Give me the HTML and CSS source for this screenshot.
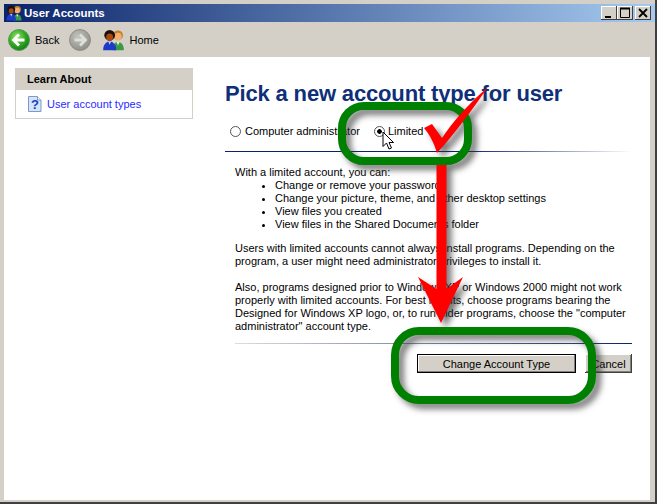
FILE: index.html
```html
<!DOCTYPE html>
<html lang="en">
<head>
<meta charset="utf-8">
<title>User Accounts</title>
<link rel="stylesheet" href="styles.css">
</head>
<body>
<div class="window">
  <header class="titlebar">
    <svg class="title-icon" viewBox="0 0 16 16" width="16" height="16"><use href="#users"/></svg>
    <span class="title-text">User Accounts</span>
    <div class="controls">
      <button class="ctl"><svg viewBox="0 0 16 14" width="16" height="14"><rect x="4" y="10" width="6" height="2" fill="#000"/></svg></button>
      <button class="ctl"><svg viewBox="0 0 16 14" width="16" height="14"><path d="M3.500 2.500h9v9h-9z" fill="none" stroke="#000"/><path d="M3 2.500h10" stroke="#000" stroke-width="2"/></svg></button>
      <button class="ctl ctl-close"><svg viewBox="0 0 16 14" width="16" height="14"><path d="M4 3l8 8M12 3l-8 8" fill="none" stroke="#000" stroke-width="1.800"/></svg></button>
    </div>
  </header>
  <nav class="toolbar">
    <svg class="nav-btn" viewBox="0 0 22 22" width="22" height="22">
      <defs><radialGradient id="gb" cx=".4" cy=".35" r=".75"><stop offset="0" stop-color="#9be870"/><stop offset=".5" stop-color="#35ab25"/><stop offset="1" stop-color="#0b6f14"/></radialGradient></defs>
      <circle cx="11" cy="11" r="10.500" fill="url(#gb)" stroke="#5e9a58"/>
      <path d="M11 5.500 L5.500 11 L11 16.500 M6 11 H16.500" fill="none" stroke="#fff" stroke-width="2.800"/>
    </svg>
    <span class="nav-label">Back</span>
    <svg class="nav-btn nav-forward" viewBox="0 0 22 22" width="22" height="22">
      <defs><radialGradient id="gg" cx=".4" cy=".35" r=".8"><stop offset="0" stop-color="#c4c4c0"/><stop offset="1" stop-color="#84847e"/></radialGradient></defs>
      <circle cx="11" cy="11" r="10.500" fill="url(#gg)" stroke="#8e8e8a"/>
      <path d="M11 5.500 L16.500 11 L11 16.500 M16 11 H5.500" fill="none" stroke="#dededa" stroke-width="2.800"/>
    </svg>
    <svg class="home-icon" viewBox="0 0 16 16" width="23" height="22"><use href="#users"/></svg>
    <span class="nav-label nav-home">Home</span>
  </nav>
  <main class="content">
    <aside class="side">
      <h2 class="side-head">Learn About</h2>
      <div class="side-body">
        <svg viewBox="0 0 14 16" width="14" height="16">
          <path d="M.5 .5h9l3.500 3.500v11.500h-12.500z" fill="#d4e4fa" stroke="#7d9ac4"/>
          <path d="M9.500 .5v3.500h3.500" fill="#fff" stroke="#7d9ac4"/>
          <text x="7" y="13" class="help-q">?</text>
        </svg>
        <a class="side-link" href="#">User account types</a>
      </div>
    </aside>
    <section class="main">
      <h1 class="heading">Pick a new account type for user</h1>
      <div class="radios">
        <label class="radio"><span class="dot"></span>Computer administrator</label>
        <label class="radio radio-limited"><span class="dot dot-on"></span>Limited</label>
      </div>
      <div class="rule rule-top"></div>
      <div class="copy">
        <p>With a limited account, you can:</p>
        <ul>
          <li>Change or remove your password</li>
          <li>Change your picture, theme, and other desktop settings</li>
          <li>View files you created</li>
          <li>View files in the Shared Documents folder</li>
        </ul>
        <p class="p-a">Users with limited accounts cannot always install programs. Depending on the<br>program, a user might need administrator privileges to install it.</p>
        <p class="p-b">Also, programs designed prior to Windows XP or Windows 2000 might not work<br>properly with limited accounts. For best results, choose programs bearing the<br>Designed for Windows XP logo, or, to run older programs, choose the "computer<br>administrator" account type.</p>
      </div>
      <div class="rule rule-bottom"></div>
      <div class="actions">
        <button class="btn btn-primary">Change Account Type</button>
        <button class="btn btn-cancel">Cancel</button>
      </div>
    </section>
  </main>
  <svg class="overlay" viewBox="0 0 657 504" width="657" height="504">
    <g class="shadowed">
      <path class="red" d="M436.500 160 H446.500 V289 L463 277 L441 323 L418 277 L436.500 289 Z"/>
      <rect x="342" y="106" width="126" height="55" rx="22" class="ring"/>
      <rect x="395" y="331" width="197" height="69" rx="24" class="ring"/>
      <path class="red" d="M424 128 L432 124 L442 138 C452 123 468 104 488 87 C472 110 453 136 437 153 C434 143 430 135 424 128 Z"/>
    </g>
    <path d="M383 132 V146.500 L386.500 143 L389 149 L391.500 148 L389 142.500 L393.500 142.500 Z" fill="#fff" stroke="#000"/>
  </svg>
</div>
<svg class="defs" width="0" height="0">
  <symbol id="users" viewBox="0 0 16 16">
    <circle cx="11.300" cy="4.600" r="3.600" fill="#c9802c"/>
    <ellipse cx="11.300" cy="5.500" rx="2.600" ry="2.800" fill="#f2b070"/>
    <path d="M7.500 15.500c-.2-4 1.500-6 3.800-6s4.300 2 4.200 6z" fill="#3a9a48"/>
    <path d="M10.300 9.500h2l-1 2.500z" fill="#e8f4e8"/>
    <circle cx="5.200" cy="4.600" r="3.900" fill="#1a1008"/>
    <ellipse cx="5.200" cy="6" rx="2.500" ry="2.700" fill="#a84a18"/>
    <path d="M.5 15.500c-.2-4 2-6.500 4.700-6.500s5 2.500 4.800 6.500z" fill="#1c3cc8"/>
    <path d="M4.200 9h2l-1 2.500z" fill="#c8d8ff"/>
  </symbol>
</svg>
</body>
</html>
```
FILE: styles.css
```css
* { box-sizing: border-box; }
html, body { margin: 0; padding: 0; }
body { width: 657px; height: 504px; overflow: hidden; background: #d4d0c8; font-family: "Liberation Sans", Arial, sans-serif; font-size: 11px; color: #000; }
.defs { position: absolute; }
.window { position: relative; width: 657px; height: 504px; padding: 4px 0 0 4px; border-right: 2px solid #404040; border-bottom: 2px solid #404040; background: #d4d0c8; display: flex; flex-direction: column; }
.titlebar { height: 18px; flex: none; display: flex; align-items: center; padding: 0 4px 0 2px; background: linear-gradient(90deg, #0a246a, #a6caf0); }
.title-icon { flex: none; margin-right: 2px; }
.title-text { color: #fff; font-weight: 700; font-size: 11.500px; }
.controls { margin-left: auto; display: flex; }
.ctl { width: 16px; height: 14px; padding: 0; border: 0; display: block; background: #d4d0c8; box-shadow: inset -1px -1px 0 #404040, inset 1px 1px 0 #fff; }
.ctl-close { margin-left: 2px; }
.toolbar { height: 35px; flex: none; display: flex; align-items: center; padding-left: 4px; font-size: 11px; }
.nav-label { margin-left: 5px; }
.nav-home { margin-left: 4px; }
.nav-forward { margin-left: 10px; }
.home-icon { margin-left: 11px; }
.content { flex: 1; margin: 0 5px 2px 0; background: #fff; display: flex; align-items: flex-start; }
.side { width: 178px; margin: 11px 0 0 11px; border: 1px solid #d4d0c8; flex: none; }
.side-head { margin: 0; height: 21px; background: #d4d0c8; font-size: 11px; font-weight: 700; line-height: 21px; padding-left: 11px; }
.side-body { height: 28px; display: flex; align-items: center; padding-left: 12px; gap: 5px; }
.help-q { font: 700 13px "Liberation Sans", sans-serif; fill: #1a3fc4; text-anchor: middle; }
.side-link { color: #2a2aff; text-decoration: none; }
.main { width: 407px; margin-left: 32px; }
.heading { margin: 24px 0 0; font-size: 22px; letter-spacing: -.16px; line-height: 26px; font-weight: 700; color: #0f2f78; white-space: nowrap; }
.radios { display: flex; margin: 18px 0 0 5px; height: 13px; align-items: center; }
.radio { display: flex; align-items: center; gap: 4px; line-height: 13px; }
.radio-limited { margin-left: 14px; gap: 3px; }
.dot { width: 11px; height: 11px; border-radius: 50%; border: 1px solid #555; background: #fff; position: relative; }
.dot-on { background: radial-gradient(circle, #000 0 2px, #fff 2.600px); }
.rule { height: 1px; }
.rule-top { margin-top: 13px; background: linear-gradient(90deg, #0a246a 60%, #fff); }
.rule-bottom { margin: 10px 0 0 10px; background: linear-gradient(90deg, #ddd, #0a246a); }
.copy { margin: 14px 0 0 10px; line-height: 13px; white-space: nowrap; }
.copy p { margin: 0; }
.copy ul { margin: 0; padding: 0 0 0 40px; }
.copy li { list-style: disc; }
.copy .p-a { margin-top: 11px; }
.copy .p-b { margin-top: 13px; }
.actions { display: flex; justify-content: flex-end; gap: 9px; margin-top: 10px; }
.btn { height: 19px; padding: 0; font: 11px "Liberation Sans", Arial, sans-serif; color: #000; background: #d4d0c8; }
.btn-primary { width: 159px; border: 1px solid #000; box-shadow: inset -1px -1px 0 #808080, inset 1px 1px 0 #fff; }
.btn-cancel { width: 47px; border: 0; box-shadow: inset -1px -1px 0 #404040, inset 1px 1px 0 #fff, inset -2px -2px 0 #808080; }
.overlay { position: absolute; left: 0; top: 0; pointer-events: none; }
.shadowed { filter: drop-shadow(5px 5px 3px rgba(50, 50, 50, .65)); }
.ring { fill: none; stroke: #008000; stroke-width: 8; }
.red { fill: #ff0000; }
```
